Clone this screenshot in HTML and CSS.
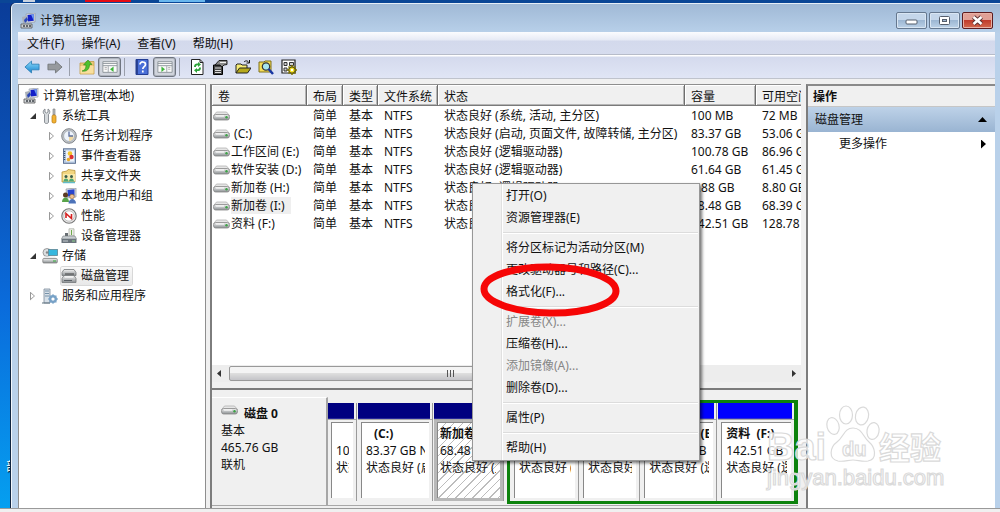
FILE: index.html
```html
<!DOCTYPE html>
<html lang="zh-CN">
<head>
<meta charset="utf-8">
<title>计算机管理</title>
<link rel="stylesheet" href="styles.css">
</head>
<body>
<svg class="defs" aria-hidden="true">
  <linearGradient id="gGray" x1="0" y1="0" x2="0" y2="1"><stop offset="0" stop-color="#f4f4f4"/><stop offset="1" stop-color="#8a8f92"/></linearGradient>
  <linearGradient id="gBlue" x1="0" y1="0" x2="0" y2="1"><stop offset="0" stop-color="#8fdcfb"/><stop offset="1" stop-color="#1583cf"/></linearGradient>
  <symbol id="computer" viewBox="0 0 16 16">
    <path d="M6 1l9-1v9l-8 1z" fill="#d9dde2" stroke="#8b929c" stroke-width=".6"/>
    <path d="M7.500 2l6.300-.7v6.400l-5.800.8z" fill="#1420c8"/><path d="M11 1.600l2.800-.3v6.400z" fill="#6f9cf0"/>
    <path d="M2 4l4-1 1 6-4 2z" fill="#aab0b8"/><path d="M4 7l3-3 1 3-3 3z" fill="#2a47b8"/>
    <path d="M1 11h11v4H1z" fill="#cfd3d6" stroke="#555" stroke-width=".8"/><path d="M3 13h2M6 13h2M9 13h2" stroke="#3c4147" stroke-width="1.500"/>
  </symbol>
  <symbol id="tools" viewBox="0 0 16 16">
    <path d="M3 1v3l1.500 1L6 4V1c2 1 2.500 4 .5 5.500V14c0 2-4 2-4 0V6.500C.5 5 1 2 3 1z" fill="#d5d9dc" stroke="#737a80" stroke-width=".8"/>
    <path d="M11 1h2v6h-2z" fill="#b9bec2" stroke="#777" stroke-width=".6"/><rect x="10" y="7" width="4" height="8" rx="1.500" fill="#f2b233" stroke="#b57610" stroke-width=".7"/>
  </symbol>
  <symbol id="clock" viewBox="0 0 16 16">
    <circle cx="8" cy="8" r="7.300" fill="#c3c7cb" stroke="#767b80" stroke-width=".9"/><circle cx="8" cy="8" r="5.400" fill="#eef4fb" stroke="#8e959b" stroke-width=".6"/>
    <path d="M8 8h4.500A5 5 0 0 1 8 13z" fill="#f1d9a0"/><path d="M8 3.500V8h4" fill="none" stroke="#5d6f9b" stroke-width="1.300"/>
  </symbol>
  <symbol id="events" viewBox="0 0 16 16">
    <rect x="2.500" y=".8" width="12" height="14.500" fill="#b8cbe2" stroke="#54698c" stroke-width=".9"/><rect x="5" y="2.500" width="8" height="11" fill="#eef3fa"/>
    <path d="M3.500 3v10" stroke="#3f5273" stroke-width="1.500" stroke-dasharray="1 1"/>
    <circle cx="9" cy="5.500" r="2.300" fill="#f4c52d"/><circle cx="10.500" cy="9" r="2.200" fill="#dd3131"/><circle cx="7.500" cy="11.500" r="1.800" fill="#e7a92a"/>
  </symbol>
  <symbol id="shared" viewBox="0 0 16 16">
    <path d="M1 4l5-1 1-1.500 7 1V14H1z" fill="#f2d681" stroke="#b8943a" stroke-width=".8"/><path d="M2 6h12v7H2z" fill="#f9e8a9"/>
    <circle cx="5" cy="8.500" r="1.500" fill="#3a5d49"/><circle cx="10.500" cy="8.500" r="1.500" fill="#3a5d49"/><path d="M2.500 13.500c0-4 5-4 5 0zM8 13.500c0-4 5-4 5 0z" fill="#4fa873"/><path d="M2 14.500h12" stroke="#63bcc9" stroke-width="1.500"/>
  </symbol>
  <symbol id="users" viewBox="0 0 16 16">
    <path d="M5 1l10-1v9l-9 1z" fill="#d9dde2" stroke="#8b929c" stroke-width=".7"/><path d="M6.500 2l7-.7v6.400l-6.500.8z" fill="#2745cf"/>
    <circle cx="4.500" cy="7" r="2.500" fill="#5a3a22"/><path d="M1 14c0-6 7-6 7 0z" fill="#58a34a"/><circle cx="11" cy="8.500" r="2.300" fill="#eec08f" stroke="#815a32" stroke-width=".6"/><path d="M7.500 15.500c0-6 7.500-6 7.500 0z" fill="#4d73b9"/>
  </symbol>
  <symbol id="perf" viewBox="0 0 16 16">
    <circle cx="8" cy="8" r="7.200" fill="#e9e9e9" stroke="#777" stroke-width="1.100"/><circle cx="8" cy="8" r="5.200" fill="#fff" stroke="#aaa" stroke-width=".7"/><path d="M5 10V5.500l5.500 5V6" fill="none" stroke="#d52020" stroke-width="1.600"/>
  </symbol>
  <symbol id="device" viewBox="0 0 16 16">
    <path d="M8 .8h5V8H8z" fill="#eef0e8" stroke="#a4a89e" stroke-width=".7"/><path d="M10.500 2v5" stroke="#6faa4e"/>
    <path d="M4 5h3v3H4z" fill="#686e73"/><path d="M2 8h12l1.500 3h-15z" fill="#c8cdd1" stroke="#74797d" stroke-width=".6"/><path d="M.5 11h15v4H.5z" fill="#6b747c"/><path d="M2 13h5" stroke="#c7cdd1"/><path d="M11 13h3" stroke="#8fd18f"/>
  </symbol>
  <symbol id="storage" viewBox="0 0 16 16">
    <circle cx="5" cy="4.500" r="4" fill="#dcdfe1" stroke="#888" stroke-width=".8"/><circle cx="5" cy="4.500" r="1.200" fill="#888"/>
    <rect x="6.500" y="1.500" width="9" height="6" fill="#36b7de" stroke="#5b8695" stroke-width=".8"/><path d="M2 8.500h11l2 2.500H1z" fill="#eee"/><rect x=".8" y="10.500" width="14.500" height="4.500" rx="1" fill="url(#gGray)" stroke="#777" stroke-width=".7"/><path d="M11 13h3" stroke="#48b04d" stroke-width="1.200"/>
  </symbol>
  <symbol id="disks" viewBox="0 0 16 16">
    <path d="M3 1.500h10l2 3v3H1v-3z" fill="url(#gGray)" stroke="#73777a" stroke-width=".8"/><path d="M4 6h9" stroke="#444"/><path d="M3 7.500h10l2 3v4H1v-4z" fill="url(#gGray)" stroke="#73777a" stroke-width=".8"/><path d="M3 12.500h8" stroke="#5a6065"/><path d="M4 9h8" stroke="#fff"/>
  </symbol>
  <symbol id="services" viewBox="0 0 16 16">
    <path d="M2 1h6v14H2z" fill="#d7e0e8" stroke="#7c8c99" stroke-width=".8"/><path d="M3 3h4M3 5.500h4M3 8h4" stroke="#7692a9"/><path d="M0 15h8" stroke="#5f737f"/>
    <circle cx="11" cy="11" r="3" fill="none" stroke="#78a2c7" stroke-width="2"/><path d="M11 6.200v9.600M6.200 11h9.600M7.600 7.600l6.800 6.800M14.400 7.600l-6.800 6.800" stroke="#78a2c7" stroke-width="1.300"/><circle cx="11" cy="11" r="1.600" fill="#fff"/>
  </symbol>
  <symbol id="drive" viewBox="0 0 17 10">
    <path d="M3.500 1h10l3 3.500H.7z" fill="#e6e6e6" stroke="#aaa" stroke-width=".7"/><rect x=".6" y="3.500" width="15.800" height="5.500" rx="2" fill="url(#gGray)" stroke="#858585" stroke-width=".8"/><path d="M3 5h8" stroke="#fff"/><circle cx="13.500" cy="6.300" r="1.200" fill="#3ca346"/>
  </symbol>
  <symbol id="back" viewBox="0 0 17 16"><path d="M1 8l7-6.300V5h8v6H8v3.300z" fill="url(#gBlue)" stroke="#2c7fb5" stroke-width=".9"/></symbol>
  <symbol id="forward" viewBox="0 0 17 16"><path d="M16 8L9 1.700V5H1v6h8v3.300z" fill="#979a9d" stroke="#707376" stroke-width=".9"/></symbol>
  <symbol id="up" viewBox="0 0 16 16"><path d="M1 4h5l1-1.500h8V15H1z" fill="#ecc979" stroke="#c39c47" stroke-width=".8"/><path d="M1.500 7h13v7.500h-13z" fill="#f8df9e"/><path d="M3 12c3-.5 4-3 4-6H4.500L9 1l4 4.500h-2.500C10.500 10 8 13 3 12z" fill="#4fc12e" stroke="#2c8a18" stroke-width=".6"/></symbol>
  <symbol id="paneL" viewBox="0 0 18 14"><path d="M1 1h16v12H1z" fill="#fafafa" stroke="#8a9097"/><path d="M1 3h16M1 5.500h16" stroke="#8a9097"/><path d="M7 6v7" stroke="#9aa0a6"/><path d="M3 7.500h2.500M3 9.500h2.500" stroke="#aaa"/><path d="M13 6.500v6L9 9.500z" fill="#3db53a"/></symbol>
  <symbol id="paneR" viewBox="0 0 18 14"><path d="M1 1h16v12H1z" fill="#fafafa" stroke="#8a9097"/><path d="M1 3h16M1 5.500h16" stroke="#8a9097"/><path d="M11 6v7" stroke="#9aa0a6"/><path d="M12.500 7.500H15M12.500 9.500H15" stroke="#aaa"/><path d="M5 6.500v6l4-3z" fill="#3db53a"/></symbol>
  <symbol id="help" viewBox="0 0 16 16"><path d="M2 .5h12v15H2z" fill="#4a6fd8" stroke="#233d94"/><path d="M3 1v14" stroke="#203680" stroke-width="1.500"/><path d="M6 5.500C6 2 11.500 2.300 11.500 5.400c0 2.200-2.700 2.300-2.700 4.600M8.800 11.500v2" stroke="#fff" stroke-width="1.700" fill="none"/></symbol>
  <symbol id="refresh" viewBox="0 0 16 16"><path d="M2.500.5h8.500l3 3v12H2.500z" fill="#fff" stroke="#222"/><path d="M11 .5v3h3" fill="none" stroke="#222"/><path d="M5 8c0-3 2-4 4-3.500V3l3 2.500L9 8V6.500C7.500 6 7 7 7 8zM12 8.500c0 3-2 4-4 3.500V14l-3-2.700L8 9v1.200c1.500.3 2-.5 2-1.700z" fill="#2da43a"/></symbol>
  <symbol id="props" viewBox="0 0 16 16"><path d="M1.500 6h9v9.500h-9z" fill="#444" stroke="#000"/><path d="M3 9h6M3 11.500h6M3 13.500h6" stroke="#ddd"/><path d="M3 6l4-4.500h8v4l-3 .5-2 2-2-2z" fill="#8a8a8a" stroke="#111" stroke-width=".9"/><path d="M8 3.500h6" stroke="#eee"/></symbol>
  <symbol id="open" viewBox="0 0 16 16"><path d="M1 14V6l1-1h4l1 1h5v3" fill="#f6ec75" stroke="#222"/><path d="M1 14l3.500-5H16l-3.500 5z" fill="#b6a91b" stroke="#222"/><path d="M9 3c2-2 4-1 5 .7M14.500 1v3h-3" fill="none" stroke="#111"/></symbol>
  <symbol id="find" viewBox="0 0 16 16"><path d="M1 3h5l1-1h6v11H1z" fill="#f5dc57" stroke="#7e701a"/><circle cx="8" cy="7.500" r="3.700" fill="#a6e4ef" stroke="#333" stroke-width="1.200"/><path d="M10.500 10l4.500 5" stroke="#1836a3" stroke-width="2.500"/></symbol>
  <symbol id="config" viewBox="0 0 16 16"><path d="M1 1h13v13H1z" fill="#fff" stroke="#222" stroke-width="1.200"/><path d="M3 3.500h3v3H3zM8.500 3.500h4v3h-4zM3 9h3v3H3z" fill="#ccc" stroke="#333"/><circle cx="11" cy="11" r="3.200" fill="#f2df27" stroke="#504900" stroke-width="1.200"/><path d="M11 6v2M11 14v2M6 11h2M14 11h2M7.500 7.500L9 9M13 13l1.500 1.500M14.500 7.500L13 9M9 13l-1.500 1.500" stroke="#7d7200" stroke-width="1.500"/><circle cx="11" cy="11" r="1.200" fill="#fff"/></symbol>
</svg>

<div class="desktop">
  <div class="peek"><span class="peek-white"></span><span class="peek-red"></span><span class="peek-blue"></span></div>
  <div class="shortcut">部</div>

  <main class="window">
    <header class="titlebar">
      <svg class="icon"><use href="#computer"/></svg>
      <h1>计算机管理</h1>
      <div class="controls">
        <button class="ctl" aria-label="最小化"><svg viewBox="0 0 29 15"><rect x="9" y="7" width="11" height="4" rx="1" fill="#fff" stroke="#555e6c"/></svg></button>
        <button class="ctl" aria-label="最大化"><svg viewBox="0 0 29 15"><rect x="9.500" y="3.500" width="10" height="8" rx="1" fill="#fff" stroke="#555e6c"/><rect x="12.500" y="6.500" width="4" height="2" fill="#9fb6d0" stroke="#555e6c"/></svg></button>
        <button class="ctl close" aria-label="关闭"><svg viewBox="0 0 29 15"><path d="M10.500 4l8 7M18.500 4l-8 7" stroke="#5a3030" stroke-width="4.400"/><path d="M10.500 4l8 7M18.500 4l-8 7" stroke="#fff" stroke-width="2.600"/></svg></button>
      </div>
    </header>

    <div class="client">
      <nav class="menubar">
        <button>文件(F)</button><button>操作(A)</button><button>查看(V)</button><button>帮助(H)</button>
      </nav>
      <div class="toolbar">
        <button aria-label="后退"><svg class="icon"><use href="#back"/></svg></button>
        <button aria-label="前进"><svg class="icon"><use href="#forward"/></svg></button>
        <i class="tsep"></i>
        <button aria-label="上一级"><svg class="icon"><use href="#up"/></svg></button>
        <button class="pressed" aria-label="显示控制台树"><svg class="icon"><use href="#paneL"/></svg></button>
        <i class="tsep"></i>
        <button aria-label="帮助"><svg class="icon"><use href="#help"/></svg></button>
        <button class="pressed" aria-label="显示操作窗格"><svg class="icon"><use href="#paneR"/></svg></button>
        <i class="tsep"></i>
        <button aria-label="刷新"><svg class="icon"><use href="#refresh"/></svg></button>
        <button aria-label="属性"><svg class="icon"><use href="#props"/></svg></button>
        <button aria-label="打开"><svg class="icon"><use href="#open"/></svg></button>
        <button aria-label="查找"><svg class="icon"><use href="#find"/></svg></button>
        <button aria-label="设置"><svg class="icon"><use href="#config"/></svg></button>
      </div>

      <div class="panes">
        <ul class="tree">
          <li class="lv0"><svg class="icon"><use href="#computer"/></svg><span>计算机管理(本地)</span></li>
          <li class="lv1"><i class="tw open"></i><svg class="icon"><use href="#tools"/></svg><span>系统工具</span></li>
          <li class="lv2"><i class="tw"></i><svg class="icon"><use href="#clock"/></svg><span>任务计划程序</span></li>
          <li class="lv2"><i class="tw"></i><svg class="icon"><use href="#events"/></svg><span>事件查看器</span></li>
          <li class="lv2"><i class="tw"></i><svg class="icon"><use href="#shared"/></svg><span>共享文件夹</span></li>
          <li class="lv2"><i class="tw"></i><svg class="icon"><use href="#users"/></svg><span>本地用户和组</span></li>
          <li class="lv2"><i class="tw"></i><svg class="icon"><use href="#perf"/></svg><span>性能</span></li>
          <li class="lv2"><i class="tw none"></i><svg class="icon"><use href="#device"/></svg><span>设备管理器</span></li>
          <li class="lv1"><i class="tw open"></i><svg class="icon"><use href="#storage"/></svg><span>存储</span></li>
          <li class="lv2"><i class="tw none"></i><div class="selected"><svg class="icon"><use href="#disks"/></svg><span>磁盘管理</span></div></li>
          <li class="lv1"><i class="tw"></i><svg class="icon"><use href="#services"/></svg><span>服务和应用程序</span></li>
        </ul>

        <section class="middle">
          <div class="volumes">
            <table>
              <colgroup><col class="c-name"><col class="c-layout"><col class="c-type"><col class="c-fs"><col class="c-state"><col class="c-size"><col class="c-free"></colgroup>
              <thead><tr><th>卷</th><th>布局</th><th>类型</th><th>文件系统</th><th>状态</th><th>容量</th><th>可用空间</th></tr></thead>
              <tbody>
                <tr><td><svg class="drive"><use href="#drive"/></svg></td><td>简单</td><td>基本</td><td>NTFS</td><td>状态良好 (系统, 活动, 主分区)</td><td>100 MB</td><td>72 MB</td></tr>
                <tr><td><svg class="drive"><use href="#drive"/></svg><span>&nbsp;(C:)</span></td><td>简单</td><td>基本</td><td>NTFS</td><td>状态良好 (启动, 页面文件, 故障转储, 主分区)</td><td>83.37 GB</td><td>53.06 GB</td></tr>
                <tr><td><svg class="drive"><use href="#drive"/></svg><span>工作区间 (E:)</span></td><td>简单</td><td>基本</td><td>NTFS</td><td>状态良好 (逻辑驱动器)</td><td>100.78 GB</td><td>86.96 GB</td></tr>
                <tr><td><svg class="drive"><use href="#drive"/></svg><span>软件安装 (D:)</span></td><td>简单</td><td>基本</td><td>NTFS</td><td>状态良好 (逻辑驱动器)</td><td>61.64 GB</td><td>61.45 GB</td></tr>
                <tr><td><svg class="drive"><use href="#drive"/></svg><span>新加卷 (H:)</span></td><td>简单</td><td>基本</td><td>NTFS</td><td>状态良好 (逻辑驱动器)</td><td>8.88 GB</td><td>8.80 GB</td></tr>
                <tr><td><svg class="drive"><use href="#drive"/></svg><span class="picked">新加卷 (I:)</span></td><td>简单</td><td>基本</td><td>NTFS</td><td>状态良好 (主分区)</td><td>68.48 GB</td><td>68.39 GB</td></tr>
                <tr><td><svg class="drive"><use href="#drive"/></svg><span>资料 (F:)</span></td><td>简单</td><td>基本</td><td>NTFS</td><td>状态良好 (逻辑驱动器)</td><td>142.51 GB</td><td>128.78 GB</td></tr>
              </tbody>
            </table>
            <div class="hscroll"><i class="arrow-l"></i><div class="thumb"><i></i><i></i><i></i></div><i class="arrow-r"></i></div>
          </div>

          <div class="disk">
            <div class="disk-label">
              <div class="disk-name"><svg class="drive"><use href="#drive"/></svg><b>磁盘 0</b></div>
              <div>基本</div><div>465.76 GB</div><div>联机</div>
            </div>
            <div class="parts">
              <div class="part p1"><div class="bar"></div><div class="body"><div class="text"><b>&nbsp;</b><span>100 MB</span><span>状态良好</span></div></div></div>
              <div class="part p2"><div class="bar"></div><div class="body"><div class="text"><b class="indent">(C:)</b><span>83.37 GB NTFS</span><span>状态良好 (启动</span></div></div></div>
              <div class="part p3"><div class="bar"></div><div class="body hatched"><div class="text"><b>新加卷 (I:)</b><span>68.48 GB NTFS</span><span>状态良好 (主分区</span></div></div></div>
              <div class="extended">
                <div class="part logical p4"><div class="bar"></div><div class="body"><div class="text"><b>软件安装</b><span>61.64 GB</span><span>状态良好 (逻辑</span></div></div></div>
                <div class="part logical p5"><div class="bar"></div><div class="body"><div class="text"><b>新加卷</b><span>8.88 GB</span><span>状态良好</span></div></div></div>
                <div class="part logical p6"><div class="bar"></div><div class="body"><div class="text"><b>工作区间 (E:)</b><span>100.78 GB</span><span>状态良好 (逻辑</span></div></div></div>
                <div class="part logical p7"><div class="bar"></div><div class="body"><div class="text"><b>资料&nbsp; (F:)</b><span>142.51 GB</span><span>状态良好 (逻辑</span></div></div></div>
              </div>
            </div>
          </div>
        </section>

        <aside class="actions">
          <h2>操作</h2>
          <button class="group">磁盘管理<i class="up"></i></button>
          <button class="more">更多操作<i class="right"></i></button>
        </aside>
      </div>
    </div>
  </main>
  <footer class="edge"></footer>

  <div class="context" role="menu">
    <button>打开(O)</button><button>资源管理器(E)</button><hr>
    <button>将分区标记为活动分区(M)</button><button>更改驱动器号和路径(C)...</button><button>格式化(F)...</button><hr>
    <button disabled>扩展卷(X)...</button><button>压缩卷(H)...</button><button disabled>添加镜像(A)...</button><button>删除卷(D)...</button><hr>
    <button>属性(P)</button><hr>
    <button>帮助(H)</button>
  </div>

  <svg class="ring" viewBox="0 0 140 56"><ellipse cx="70" cy="28" rx="66" ry="23" transform="rotate(1 70 28)" fill="none" stroke="#f60606" stroke-width="7"/></svg>

  <svg class="watermark" viewBox="0 0 190 95">
    <g fill="#fff" fill-opacity=".75" stroke="#dadada" stroke-width="1.200">
      <text x="7" y="60" class="wm-bai">Bai</text>
      <ellipse cx="73" cy="26" rx="6" ry="8.500" transform="rotate(-15 73 26)"/><ellipse cx="86" cy="15" rx="6.500" ry="9"/><ellipse cx="102" cy="16" rx="6.500" ry="9" transform="rotate(12 102 16)"/><ellipse cx="113" cy="31" rx="6" ry="8.500" transform="rotate(10 113 31)"/>
      <path d="M93 28c9 0 10 9 16 14s9 17-1 19c-6 1-10-1-15-1s-9 2-15 1c-10-2-8-14-1-19s7-14 16-14z"/>
      <text x="82" y="56" class="wm-du">du</text>
      <text x="119" y="59" class="wm-jy">经验</text>
      <text x="7" y="85" class="wm-url">jingyan.baidu.com</text>
    </g>
  </svg>
</div>
</body>
</html>
```

FILE: styles.css
```css
* { box-sizing: border-box; }
body {
  margin: 0;
  font: 12px/18px "Noto Sans", "Noto Sans CJK SC", sans-serif;
  color: #111;
}
button {
  font: inherit;
  color: inherit;
  background: none;
  border: 0;
  padding: 0;
  text-align: left;
}
ul { list-style: none; margin: 0; padding: 0; }
.defs { position: absolute; width: 0; height: 0; }
.icon { width: 16px; height: 16px; flex: none; display: block; }
.drive { width: 17px; height: 10px; flex: none; }

.desktop {
  position: relative;
  display: grid;
  grid-template-columns: 11px minmax(0, 1fr);
  grid-template-rows: 3px 1fr 4px;
  min-height: 100vh;
  overflow: hidden;
  background: linear-gradient(#0a3c98, #0b50b4 30%, #0a6cdc 60%, #05a0f0);
}
.peek { grid-column: 1 / -1; display: flex; padding-left: 23px; background: #0a4696; }
.peek span { height: 2px; }
.peek-white { width: 12px; background: #c9d3e0; margin-right: 50px; }
.peek-red { width: 46px; background: #e60a12; margin-right: 28px; }
.peek-blue { width: 46px; background: #69b7ee; }
.shortcut {
  align-self: end;
  padding: 0 0 32px 6px;
  overflow: hidden;
  white-space: nowrap;
  color: #fff;
  text-shadow: 1px 1px 1px #000;
}
.edge { grid-column: 1 / -1; background: #f0f0f0; border-top: 1px solid #9a9a9a; }

.window {
  display: flex;
  flex-direction: column;
  min-width: 0;
  padding: 0 5px 0 6px;
  background: linear-gradient(#a0b9d6, #b9d1ea 30px);
  border-left: 1px solid #f2f7fc;
  border-top: 1px solid #e6eef7;
  border-top-left-radius: 5px;
  box-shadow: -1px 0 #10243f;
}
.titlebar { display: flex; align-items: center; height: 28px; padding: 5px 2px 0; gap: 4px; }
.titlebar h1 { margin: 0; font: inherit; }
.controls { display: flex; gap: 2px; margin-left: auto; }
.ctl {
  width: 31px;
  height: 17px;
  border: 1px solid #65788f;
  border-radius: 2px;
  background: linear-gradient(#c4d6ea 45%, #9db7d3 50%, #bcd2e8);
  box-shadow: inset 0 0 0 1px #d9e6f3;
}
.ctl svg { display: block; width: 29px; height: 15px; }
.ctl.close {
  border-color: #5c1c20;
  background: linear-gradient(#e0a096 45%, #c03c2c 50%, #d4694e);
  box-shadow: inset 0 0 0 1px #e8b0a4;
}

.client { flex: 1; display: flex; flex-direction: column; background: #f0f0f0; }
.menubar {
  display: flex;
  gap: 17px;
  height: 23px;
  padding: 2px 9px 0;
  background: linear-gradient(#fbfcfe, #e6eaf5 8px, #d3d9ec 9px, #d6dcee);
  border-bottom: 1px solid #b7bcc9;
}
.toolbar {
  display: flex;
  align-items: center;
  height: 24px;
  padding: 1px 2px 0;
  background: linear-gradient(#fff 1px, #d4daed 2px, #e0e5f5);
  border-bottom: 1px solid #bfc3cc;
}
.toolbar button { display: grid; place-items: center; width: 23px; height: 20px; }
.toolbar .pressed {
  border: 1px solid #6f7580;
  border-radius: 3px;
  background: #d0d4dc;
  box-shadow: inset 0 0 0 1px #aeb3bd;
}
.tsep { width: 1px; height: 18px; margin: 0 5px 0 3px; background: #9a9fab; }

.panes {
  flex: 1;
  display: grid;
  grid-template-columns: 188px minmax(0, 1fr) 190px;
  gap: 4px;
  padding-top: 5px;
}

.tree { background: #fff; border: 1px solid #8e8e8e; border-width: 1px 1px 0; padding-top: 1px; }
.tree li { display: flex; align-items: center; height: 20px; gap: 4px; }
.lv0 { padding-left: 4px; }
.lv1 { padding-left: 11px; }
.lv2 { padding-left: 30px; }
.tree span { white-space: nowrap; }
.tw { width: 8px; flex: none; display: flex; }
.tw::before {
  content: "";
  width: 5px;
  height: 9px;
  background: #999;
  clip-path: polygon(0 0, 100% 50%, 0 100%, 0 0, 1px 2px, 1px 7px, 4px 50%, 1px 2px);
}
.tw.open::before { width: 6px; height: 6px; background: #333; clip-path: polygon(100% 0, 100% 100%, 0 100%); }
.tw.none::before { visibility: hidden; }
.selected {
  display: flex;
  align-items: center;
  gap: 4px;
  padding-right: 3px;
  background: linear-gradient(#f9f9f9, #e8e8e8);
  border-radius: 2px;
  box-shadow: 0 0 0 1px #d8d8d8;
}

.middle { display: flex; flex-direction: column; border-left: 2px solid #7d7d7d; border-top: 1px solid #8e8e8e; }
.volumes {
  display: flex;
  flex-direction: column;
  flex: 1;
  overflow: hidden;
  background: #fff;
  border-bottom: 2px solid #7b7b7b;
  box-shadow: inset 0 -6px #f0f0f0;
  padding-bottom: 6px;
}
table { width: 624px; table-layout: fixed; border-collapse: separate; border-spacing: 0; }
.c-name { width: 95px; }
.c-layout { width: 36px; }
.c-type { width: 35px; }
.c-fs { width: 60px; }
.c-state { width: 247px; }
.c-size { width: 71px; }
.c-free { width: 80px; }
th {
  height: 21px;
  padding: 3px 0 0 6px;
  line-height: 16px;
  font-weight: normal;
  text-align: left;
  white-space: nowrap;
  background: #f0f0f0;
  border-right: 1px solid #6e6e6e;
  border-bottom: 1px solid #7a7a7a;
  box-shadow: inset 1px 1px #fff, inset -1px -1px #b5b5b5;
}
td { height: 18px; padding: 1px 0 0 6px; line-height: 17px; white-space: nowrap; }
td:first-child { display: flex; align-items: center; padding-left: 1px; gap: 1px; }
.picked { background: #efefef; padding-right: 6px; }

.hscroll { display: flex; align-items: center; margin-top: auto; height: 17px; background: #ededed; padding: 0 5px; gap: 8px; }
.arrow-l, .arrow-r { width: 4px; height: 7px; background: #333; }
.arrow-l { clip-path: polygon(100% 0, 100% 100%, 0 50%); }
.arrow-r { clip-path: polygon(0 0, 100% 50%, 0 100%); margin-left: auto; }
.thumb {
  width: 442px;
  height: 15px;
  display: flex;
  justify-content: center;
  align-items: center;
  gap: 2px;
  background: linear-gradient(#f4f4f4 45%, #dedede 50%, #c4c4c8);
  border: 1px solid #999;
  border-radius: 2px;
}
.thumb i { width: 1px; height: 7px; background: #555; }

.disk {
  display: flex;
  height: 109px;
  margin: 7px 3px 2px 0;
  border-bottom: 1px solid #a8a8a8;
}
.disk-label {
  width: 116px;
  flex: none;
  padding: 7px 0 0 9px;
  line-height: 17px;
  border-top: 1px solid #fff;
  border-right: 2px solid #a6a6a6;
}
.disk-name { display: flex; gap: 6px; }
.parts { flex: 1; min-width: 0; display: flex; padding: 3px 0 1px; }
.part { display: flex; flex-direction: column; min-width: 0; margin: 3px 0; border-right: 1px solid #9a9a9a; }
.bar { height: 16px; margin-right: 2px; background: #000080; border-bottom: 1px solid #26269a; }
.body { flex: 1; padding: 2px 3px 3px; background: #f0f0f0; border-top: 1px solid #aaa; }
.text {
  height: 100%;
  padding: 2px 4px 0;
  overflow: hidden;
  background: #fff;
  border-left: 1px solid #888;
  border-top: 1px solid #888;
  line-height: 17px;
  white-space: nowrap;
}
.text b, .text span { display: block; overflow: hidden; }
.indent { padding-left: 8px; }
.p1 { width: 29px; }
.p2 { width: 75px; margin-left: 1px; }
.p3 { width: 70px; margin-left: 1px; }
.hatched { background: #b8b8b8; }
.hatched .text {
  padding-left: 2px;
  background: repeating-linear-gradient(135deg, #fff 0 5px, #bdbdbd 5px 6px);
}
.extended {
  flex: 1;
  display: flex;
  min-width: 0;
  margin-left: 3px;
  border: 3px solid #0c820c;
  border-right-width: 4px;
}
.logical { margin: 0; padding-left: 1px; flex: 1 1 0; }
.logical .bar { background: #0000ff; border-color: #3030d0; }
.p4 { flex-grow: 69; }
.p5 { flex-grow: 61; }
.p6 { flex-grow: 77; }
.p7 { flex-grow: 78; border-right: 0; }

.actions { background: #fff; border-left: 2px solid #7d7d7d; border-top: 2px solid #8a8a8a; margin-left: 1px; }
.actions h2 {
  margin: 0;
  padding: 2px 5px 0;
  font-size: 12px;
  line-height: 18px;
  background: #f0f0f0;
  border-bottom: 1px solid #c6c6c6;
}
.actions button { display: flex; align-items: center; justify-content: space-between; width: 100%; height: 25px; padding: 0 8px 0 7px; }
.actions .group { background: linear-gradient(#bed2e8, #99b4d2); }
.actions .more { height: 24px; padding: 0 9px 0 31px; }
.up { width: 9px; height: 5px; background: #000; clip-path: polygon(50% 0, 100% 100%, 0 100%); }
.right { width: 5px; height: 9px; background: #000; clip-path: polygon(0 0, 100% 50%, 0 100%); }

.context {
  position: absolute;
  left: 472px;
  top: 183px;
  width: 228px;
  padding: 1px;
  border: 1px solid #979797;
  background: linear-gradient(90deg, #f0f0f0 28px, #e0e0e0 28px, #e0e0e0 29px, #fff 29px, #fff 30px, #f0f0f0 30px);
  box-shadow: 2px 2px 3px rgba(0, 0, 0, .55);
}
.context button { display: block; width: 100%; height: 22px; padding-left: 32px; line-height: 22px; }
.context button:disabled { color: #868686; }
.context hr { height: 2px; margin: 3px 0 3px 29px; border: 0; border-top: 1px solid #dcdcdc; background: #fff; }
.ring { position: absolute; left: 480px; top: 262px; width: 140px; height: 56px; pointer-events: none; }

.watermark { position: absolute; right: 50px; bottom: 17px; width: 190px; height: 95px; pointer-events: none; }
.wm-bai { font: bold 38px "Liberation Sans", sans-serif; }
.wm-du { font: bold 20px "Liberation Sans", sans-serif; }
.wm-jy { font: bold 31px "Noto Sans CJK SC", sans-serif; }
.wm-url { font: 22px "Liberation Sans", sans-serif; }
```
